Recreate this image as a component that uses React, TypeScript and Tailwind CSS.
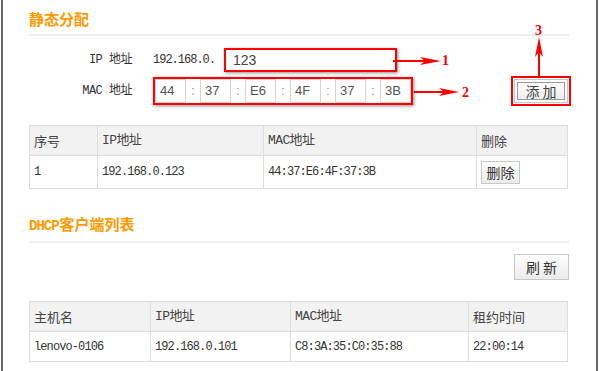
import React from 'react'

const cjk = "font-['Noto_Sans_CJK_SC',sans-serif]"
const song = "font-['Liberation_Mono','Noto_Sans_CJK_SC',monospace]"

const macParts = ['44', '37', 'E6', '4F', '37', '3B']

const staticCols = ['w-[68px]', 'w-[166px]', 'w-[213px]', 'w-[91px]']
const dhcpCols = ['w-[121px]', 'w-[140px]', 'w-[178px]', 'w-[99px]']

function SectionTitle({ children }: { children: React.ReactNode }) {
  return (
    <div className="flex flex-col">
      <h2 className={`text-[15px] leading-[18px] font-bold text-[#ff9900] ${cjk}`}>{children}</h2>
      <div className="mt-[6px] h-[2px] bg-[#eeeeee]" />
    </div>
  )
}

function GrayButton({ label, className = '' }: { label: string; className?: string }) {
  return (
    <button
      className={`flex items-center justify-center border border-[#c8c8c8] bg-gradient-to-b from-white to-[#ebebeb] text-[14px] text-[#333] ${cjk} ${className}`}
    >
      {label}
    </button>
  )
}

function Annotations() {
  return (
    <div className="pointer-events-none absolute inset-0">
      <svg width="600" height="371" className="absolute left-0 top-0">
        <line x1="393" y1="61" x2="430" y2="61" stroke="#ff0000" strokeWidth="2" />
        <polygon points="420,57 441,61 420,65 425,61" fill="#ff0000" />
        <line x1="414" y1="92" x2="450" y2="92" stroke="#ff0000" strokeWidth="2" />
        <polygon points="439,88 459,92 439,96 444,92" fill="#ff0000" />
        <line x1="539" y1="77" x2="539" y2="48" stroke="#ff0000" strokeWidth="2" />
        <polygon points="535,57 539,37 543,57 539,52" fill="#ff0000" />
      </svg>
      <span className="absolute left-[442px] top-[53px] text-[14px] font-bold leading-[16px] text-[#ff0000] font-['Liberation_Serif',serif]">1</span>
      <span className="absolute left-[462px] top-[85px] text-[14px] font-bold leading-[16px] text-[#ff0000] font-['Liberation_Serif',serif]">2</span>
      <span className="absolute left-[535px] top-[23px] text-[14px] font-bold leading-[16px] text-[#ff0000] font-['Liberation_Serif',serif]">3</span>
    </div>
  )
}

export default function App() {
  return (
    <div className="relative h-[371px] w-[600px] overflow-hidden bg-white text-[#333]">
      <div className="ml-[1px] flex h-full w-[597px] flex-col border-x-2 border-[#6a6a6a] pl-[26px] pr-[27px] pt-[10px]">
        <SectionTitle>静态分配</SectionTitle>

        <div className="mt-[12px] flex h-[24px] items-center">
          <span className={`w-[103px] text-right text-[12px] ${song} tracking-[-0.5px]`}>IP 地址</span>
          <span className={`ml-[21px] text-[12px] ${song} tracking-[-1px]`}>192.168.0.</span>
          <div className="ml-[9px] flex h-[24px] w-[173px] items-center border-2 border-[#ff0000] pl-[7px] text-[14px] text-[#444] shadow-[1px_1px_3px_rgba(0,0,0,0.45)] font-['Liberation_Sans',sans-serif]">
            123
          </div>
        </div>

        <div className="mt-[5px] flex h-[28px] items-center">
          <span className={`w-[103px] text-right text-[12px] ${song} tracking-[-0.5px]`}>MAC 地址</span>
          <div className="ml-[21px] flex h-[28px] items-stretch border-2 border-[#ff0000] shadow-[1px_1px_3px_rgba(0,0,0,0.45)] font-['Liberation_Sans',sans-serif]">
            {macParts.map((p, i) => (
              <React.Fragment key={i}>
                {i > 0 && (
                  <span className="flex w-[14px] items-center justify-center text-[12px] text-[#888]">:</span>
                )}
                <span className="flex w-[31px] items-center border border-[#d4d4d4] pl-[4px] text-[13px] text-[#555]">
                  {p}
                </span>
              </React.Fragment>
            ))}
          </div>
          <GrayButton
            label="添 加"
            className="ml-auto mr-[1px] h-[24px] w-[54px] outline-2 outline-offset-[1px] outline-[#ff0000] shadow-[inset_0_0_0_2px_white,inset_0_0_0_3px_#999] text-[#444]"
          />
        </div>

        <table className="mt-[20px] w-[538px] table-fixed border-collapse text-[13px]">
          <thead>
            <tr className="h-[30px] bg-[#f2f2f2]">
              {['序号', 'IP地址', 'MAC地址', '删除'].map((h, i) => (
                <th
                  key={h}
                  className={`${staticCols[i]} border border-[#dddddd] pl-[4px] text-left font-normal text-[#444] ${i === 1 || i === 2 ? song : cjk} ${i === 1 || i === 2 ? 'tracking-[-0.6px]' : ''}`}
                >
                  {h}
                </th>
              ))}
            </tr>
          </thead>
          <tbody>
            <tr className={`h-[33px] text-[12px] ${song} tracking-[-0.9px]`}>
              <td className="border border-[#dddddd] pl-[4px]">1</td>
              <td className="border border-[#dddddd] pl-[4px]">192.168.0.123</td>
              <td className="border border-[#dddddd] pl-[4px]">44:37:E6:4F:37:3B</td>
              <td className="border border-[#dddddd] pl-[4px] tracking-normal">
                <GrayButton label="删除" className="h-[23px] w-[39px] text-[13px]" />
              </td>
            </tr>
          </tbody>
        </table>

        <div className="mt-[26px]">
          <SectionTitle>
            <span className="font-['Liberation_Mono',monospace] text-[14px] tracking-[-1px]">DHCP</span>
            <span className="ml-[1px]">客户端列表</span>
          </SectionTitle>
        </div>

        <div className="mt-[11px] flex justify-end">
          <GrayButton label="刷 新" className="h-[26px] w-[55px]" />
        </div>

        <table className="mt-[21px] w-[538px] table-fixed border-collapse text-[13px]">
          <thead>
            <tr className="h-[30px] bg-[#f2f2f2]">
              {['主机名', 'IP地址', 'MAC地址', '租约时间'].map((h, i) => (
                <th
                  key={h}
                  className={`${dhcpCols[i]} border border-[#dddddd] pl-[4px] text-left font-normal text-[#444] ${i === 1 || i === 2 ? song : cjk} ${i === 1 || i === 2 ? 'tracking-[-0.6px]' : ''}`}
                >
                  {h}
                </th>
              ))}
            </tr>
          </thead>
          <tbody>
            <tr className={`h-[30px] text-[12px] ${song} tracking-[-0.9px]`}>
              <td className="border border-[#dddddd] pl-[4px]">lenovo-0106</td>
              <td className="border border-[#dddddd] pl-[4px]">192.168.0.101</td>
              <td className="border border-[#dddddd] pl-[4px]">C8:3A:35:C0:35:88</td>
              <td className="border border-[#dddddd] pl-[4px]">22:00:14</td>
            </tr>
          </tbody>
        </table>
      </div>
      <Annotations />
    </div>
  )
}
